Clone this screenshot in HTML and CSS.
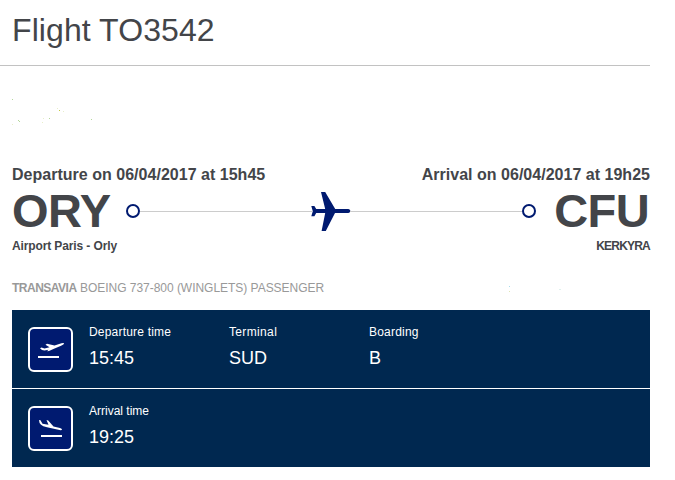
FILE: index.html
```html
<!DOCTYPE html>
<html lang="en">
<head>
<meta charset="utf-8">
<title>Flight TO3542</title>
<link rel="stylesheet" href="styles.css">
</head>
<body>
<main class="flight">
  <h1 class="title">Flight TO3542</h1>
  <svg class="specks" viewBox="0 0 100 30" aria-hidden="true">
    <path fill="#b4d69c" d="M0 3h1v1h-1zM6 24h1v1h-1zM7 25h1v1h-1zM37 22h1v1h-1zM79 23h1v1h-1z"/>
    <path fill="#c3c83c" d="M47 14h1v1h-1z"/>
    <path fill="#e8eecb" d="M51 15h1v1h-1zM45 12h1v1h-1zM31 22h1v1h-1zM30 26h1v1h-1zM0 28h1v1h-1z"/>
  </svg>
  <section class="route">
    <div class="dates">
      <span class="date-dep">Departure on 06/04/2017 at 15h45</span>
      <span class="date-arr">Arrival on 06/04/2017 at 19h25</span>
    </div>
    <div class="codes">
      <strong class="code code-dep">ORY</strong>
      <div class="track">
        <i class="dot"></i>
        <i class="line"></i>
        <svg class="plane" viewBox="0 0 40 40" aria-hidden="true">
          <path d="M10 1h4.200l10 17h13.200q2 .3 2 2t-2 2H24L14.800 40h-4.200l3.600-18H5.200L3.400 25.200H.3l1.500-5L.3 15h3.100l1.800 3h9z"/>
        </svg>
        <i class="line"></i>
        <i class="dot"></i>
      </div>
      <strong class="code code-arr">CFU</strong>
    </div>
    <div class="airports">
      <span class="name-dep">Airport Paris - Orly</span>
      <span class="name-arr">KERKYRA</span>
    </div>
  </section>
  <div class="aircraft">
    <p class="model"><b class="airline">TRANSAVIA</b> <span class="type">BOEING 737-800 (WINGLETS) PASSENGER</span></p>
    <svg class="marks" viewBox="0 0 70 12" aria-hidden="true">
      <path fill="#a8dcec" d="M0 4h1v1h-1z"/>
      <path fill="#dfe5b5" d="M0 9h1v1h-1z"/>
      <path fill="#e0f1ee" d="M50 7h2v1h-2z"/>
    </svg>
  </div>
  <section class="panel">
    <div class="row">
      <span class="icon">
        <svg viewBox="0 0 41 41" aria-hidden="true">
          <path d="M8 27h21v2H8z"/>
          <path d="M10 19.200l1.500-.6 3 .8 5-1.200-4-2.500 1.500-.9 7.500 1.700 7-2.200q2.600-.6 2.600.3t-3 2.100L24 19.700l-5 2.200-2 .3 1.500-1.500-4 .9-2.500-.6z"/>
        </svg>
      </span>
      <div class="cell"><span class="label l-dep">Departure time</span><span class="value">15:45</span></div>
      <div class="cell"><span class="label l-wide">Terminal</span><span class="value">SUD</span></div>
      <div class="cell"><span class="label l-dep">Boarding</span><span class="value">B</span></div>
    </div>
    <div class="row">
      <span class="icon">
        <svg viewBox="0 0 41 41" aria-hidden="true">
          <path d="M11 27h21v2H11z"/>
          <path d="M9 12l1.500.3 2 3.400 6 1-2-4.600 1.700.3 5.300 6.200 6.500 1.500q2 .7 2 1.500t-2.500.500L17 19.300q-4.300-.8-6-2.500Q9 14.900 9 12z"/>
        </svg>
      </span>
      <div class="cell"><span class="label">Arrival time</span><span class="value">19:25</span></div>
    </div>
  </section>
</main>
</body>
</html>
```
FILE: styles.css
```css
* { box-sizing: border-box; }
body {
  margin: 0;
  background: #fff;
  color: #434549;
  font-family: "Liberation Sans", Arial, sans-serif;
}
.flight { width: 650px; }
.title {
  height: 66px;
  margin: 0;
  padding: 12px 0 0 12px;
  border-bottom: 1px solid #c2c2c2;
  font-size: 32px;
  font-weight: 400;
  line-height: 36px;
  letter-spacing: 0.08px;
}
.specks { display: block; width: 100px; height: 30px; margin: 30px 0 0 12px; }
.route { margin: 39px 0 0 12px; }
.dates, .airports { display: flex; justify-content: space-between; font-weight: 700; white-space: nowrap; }
.dates { height: 19px; font-size: 16px; line-height: 20px; }
.date-dep, .date-arr { letter-spacing: 0.02px; }
.codes { display: flex; height: 53px; }
.code { font-size: 47px; line-height: 53px; }
.code-dep { width: 114px; letter-spacing: -0.5px; }
.code-arr { width: 114px; padding-right: 1px; text-align: right; letter-spacing: -0.6px; }
.track { display: flex; align-items: center; width: 410px; height: 54px; }
.dot { width: 14px; height: 14px; border: 2px solid #001a70; border-radius: 50%; }
.line { flex: 1; height: 1px; background: #ccc; }
.plane { width: 40px; height: 40px; margin: 0 -1px; fill: #001a70; }
.airports { height: 18px; font-size: 12px; line-height: 18px; }
.name-dep { letter-spacing: -0.12px; }
.name-arr { letter-spacing: -0.8px; }
.aircraft { display: flex; justify-content: space-between; align-items: center; height: 18px; margin: 24px 0 0 12px; font-size: 12px; line-height: 18px; color: #999; }
.model { margin: 0; white-space: nowrap; }
.airline { letter-spacing: -0.5px; }
.type { letter-spacing: -0.03px; }
.marks { width: 70px; height: 12px; margin-right: 71px; }
.panel { margin: 13px 0 0 12px; color: #fff; background: #002850; }
.row { display: flex; height: 78px; padding: 15px 16px 0; }
.row + .row { height: 79px; border-top: 1px solid #fff; }
.icon { width: 45px; height: 45px; margin: 2px 16px 0 0; border: 2px solid #fff; border-radius: 6px; background: #001a70; }
.icon svg { display: block; width: 41px; height: 41px; fill: #fff; }
.cell { width: 140px; }
.label, .value { display: block; white-space: nowrap; }
.label { font-size: 12px; line-height: 14px; }
.l-dep { letter-spacing: 0.2px; }
.l-wide { letter-spacing: 0.35px; }
.value { margin-top: 8px; font-size: 18px; line-height: 22px; }
```
